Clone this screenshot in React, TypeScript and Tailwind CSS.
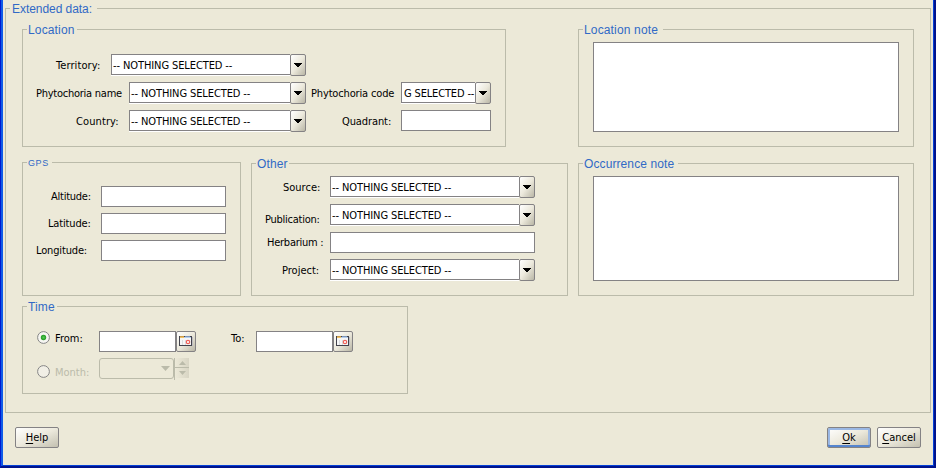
import type { ReactNode } from "react";

const UI = "font-['DejaVu_Sans_Condensed','DejaVu_Sans',sans-serif] [font-stretch:condensed] text-[11px] leading-[14px] whitespace-nowrap";

function Group({ title, box, legend, children }: { title: string; box: string; legend: string; children?: ReactNode }) {
  return (
    <section className={`relative shrink-0 border border-[#bbbbaa] ${box}`}>
      <h2 className={`absolute whitespace-nowrap bg-[#ece9d8] font-['Liberation_Sans',Arial,sans-serif] font-normal text-[#3169c6] ${legend}`}>
        {title}
      </h2>
      {children}
    </section>
  );
}

function Label({ text, className }: { text: string; className: string }) {
  return <label className={`${UI} block shrink-0 ${className}`}>{text}</label>;
}

function Field({ className }: { className: string }) {
  return <input type="text" className={`block h-[21px] shrink-0 border border-[#848284] bg-white outline-none ${className}`} />;
}

function Combo({ className, clipped = false }: { className: string; clipped?: boolean }) {
  return (
    <div className={`flex h-[22px] shrink-0 ${className}`}>
      <div className="h-[22px] min-w-0 flex-1 border-b border-white">
        <div className="flex h-[21px] items-center overflow-hidden border border-r-0 border-[#848284] bg-white">
          <span className={`${UI} pt-[2px] ${clipped ? "pl-[2px] tracking-[-0.15px]" : "pl-px tracking-[-0.1px]"}`}>
            {clipped ? "G SELECTED --" : "-- NOTHING SELECTED --"}
          </span>
        </div>
      </div>
      <button className="flex h-[22px] w-4 shrink-0 items-center justify-center rounded-[2px] border border-[#848284] bg-linear-to-br from-white via-[#ece9dc] to-[#b9b6a6]">
        <svg width="8" height="4" shapeRendering="crispEdges">
          <path d="M0 0h8v1H7v1H6v1H5v1H3V3H2V2H1V1H0z" fill="#000" />
        </svg>
      </button>
    </div>
  );
}

function DateField() {
  return (
    <div className="flex">
      <Field className="w-[77px]" />
      <button className="flex h-[21px] w-5 items-center justify-center rounded-[2px] border border-[#848284] bg-linear-to-br from-white via-[#ece9dc] to-[#b9b6a6]">
        <svg width="14" height="11" viewBox="0 0 14 11" className="shrink-0" shapeRendering="crispEdges">
          <path d="M1 10h13V1h-1v9H1z" fill="#bdbcc0" />
          <rect width="13" height="10" fill="#42424c" />
          <rect x="1" y="1" width="11" height="8" fill="#f6f6f6" />
          <rect x="1" y="0" width="4" height="1" fill="#c99a4c" />
          <rect x="1" y="1" width="4" height="1" fill="#f2c266" />
          <rect x="6" y="0" width="5" height="1" fill="#7c94b8" />
          <rect x="5" y="1" width="7" height="1" fill="#b4cdec" />
          <path d="M3 4h1v5H3zM6 4h1v5H6z" fill="#dadce0" />
          <circle cx="9" cy="6" r="1.7" fill="#fff" stroke="#ee6058" strokeWidth="1.2" shapeRendering="auto" />
        </svg>
      </button>
    </div>
  );
}

function Radio({ checked = false }: { checked?: boolean }) {
  return (
    <svg width="13" height="13" className="block shrink-0">
      <defs>
        <radialGradient id="dot">
          <stop offset="0" stopColor="#55c855" />
          <stop offset="1" stopColor="#219a21" />
        </radialGradient>
      </defs>
      <circle cx="6.5" cy="6.5" r="5.9" fill={checked ? "#f7f6f2" : "#f1efe6"} stroke="#858585" />
      {checked && <circle cx="6.5" cy="6.5" r="2.7" fill="url(#dot)" />}
    </svg>
  );
}

function Push({ mnemonic, rest, focused = false, className }: { mnemonic: string; rest: string; focused?: boolean; className: string }) {
  return (
    <button
      className={`${UI} h-[21px] w-11 shrink-0 rounded-[2px] border border-[#848284] bg-linear-to-br from-white via-[#ece9dc] to-[#c3c0b0] text-black ${className} ${
        focused ? "shadow-[inset_0_-2px_0_#5585cf,inset_0_0_0_2px_#9bb8e4]" : ""
      }`}
    >
      <span className="underline decoration-1 underline-offset-2">{mnemonic}</span>
      {rest}
    </button>
  );
}

export default function App() {
  return (
    <main className="h-[468px] w-[936px] overflow-hidden border-r-2 border-b-2 border-l border-r-[#00138c] border-b-[#00138c] border-l-[#0019cf] bg-[#ece9d8] text-black">
      <div className="h-[466px] border-r border-b border-l-2 border-r-[#0441d8] border-b-[#0441d8] border-l-[#0f5be8] pt-2 pl-[2px]">
        <Group
          title="Extended data:"
          box="h-[405px] w-[926px] pt-5 pl-4"
          legend="left-[4px] top-[-8px] w-[87px] pl-[2px] text-[12px] leading-4 tracking-[-0.05px]"
        >
          <div className="flex gap-[72px]">
            <Group title="Location" box="flex h-[118px] w-[484px] pt-6" legend="left-1 top-[-8px] w-[50px] pl-px text-[12px] leading-4 tracking-[0.15px]">
              <div className="flex w-[283px] flex-col gap-1.5">
                <div className="flex items-center">
                  <Label text="Territory:" className="w-[88px] pt-[2px] pl-[33px] tracking-[0.1px]" />
                  <Combo className="w-[195px]" />
                </div>
                <div className="flex items-center">
                  <Label text="Phytochoria name" className="w-[106px] pt-[2px] pl-[13px] tracking-[-0.25px]" />
                  <Combo className="w-[177px]" />
                </div>
                <div className="flex items-center">
                  <Label text="Country:" className="w-[106px] pt-[2px] pl-[53px] tracking-[0.1px]" />
                  <Combo className="w-[177px]" />
                </div>
              </div>
              <div className="flex flex-col gap-1.5 pt-7">
                <div className="flex items-center">
                  <Label text="Phytochoria code" className="w-[95px] pt-[2px] pl-[5px] tracking-[-0.15px]" />
                  <Combo clipped className="w-[90px]" />
                </div>
                <div className="flex items-center">
                  <Label text="Quadrant:" className="w-[95px] pt-[2px] pl-[36px] tracking-[-0.1px]" />
                  <Field className="w-[90px]" />
                </div>
              </div>
            </Group>
            <Group title="Location note" box="h-[118px] w-[336px] pt-3 pl-[14px]" legend="left-1 top-[-8px] w-[80px] pl-px text-[12px] leading-4 tracking-[0.15px]">
              <textarea className="block h-[90px] w-[306px] resize-none border border-[#848284] bg-white outline-none" />
            </Group>
          </div>

          <div className="flex items-end pt-[15px]">
            <Group title="GPS" box="flex h-[134px] w-[219px] flex-col gap-1.5 pt-[23px]" legend="left-1 top-[-7px] w-[25px] pl-px text-[9px] leading-[14px] tracking-[0.6px]">
              <div className="flex items-center">
                <Label text="Altitude:" className="w-[78px] pl-[28px] tracking-[-0.25px]" />
                <Field className="w-[125px]" />
              </div>
              <div className="flex items-center">
                <Label text="Latitude:" className="w-[78px] pl-[25px] tracking-[-0.15px]" />
                <Field className="w-[125px]" />
              </div>
              <div className="flex items-center">
                <Label text="Longitude:" className="w-[78px] pl-[13px] tracking-[-0.15px]" />
                <Field className="w-[125px]" />
              </div>
            </Group>
            <Group title="Other" box="ml-[10px] flex h-[133px] w-[317px] flex-col pt-3" legend="left-1 top-[-8px] w-[33px] pl-px text-[12px] leading-4 tracking-[0.15px]">
              <div className="flex items-center">
                <Label text="Source:" className="w-[78px] pt-[2px] pl-[31px]" />
                <Combo className="w-[205px]" />
              </div>
              <div className="mt-1.5 flex h-[22px] items-start">
                <Label text="Publication:" className="w-[78px] pt-[9px] pl-[13px] tracking-[-0.25px]" />
                <Combo className="w-[205px]" />
              </div>
              <div className="mt-1.5 flex items-center">
                <Label text="Herbarium :" className="w-[78px] pl-[15px] tracking-[-0.25px]" />
                <Field className="w-[205px]" />
              </div>
              <div className="mt-1.5 flex items-center">
                <Label text="Project:" className="w-[78px] pt-[2px] pl-[30px]" />
                <Combo className="w-[205px]" />
              </div>
            </Group>
            <Group title="Occurrence note" box="ml-[10px] h-[133px] w-[336px] pt-3 pl-[14px]" legend="left-1 top-[-8px] w-[95px] pl-px text-[12px] leading-4 tracking-[0.1px]">
              <textarea className="block h-[105px] w-[306px] resize-none border border-[#848284] bg-white outline-none" />
            </Group>
          </div>

          <div className="pt-[10px]">
            <Group title="Time" box="h-[88px] w-[386px] pt-6 pl-[14px]" legend="left-1 top-[-8px] w-[30px] pl-px text-[12px] leading-4 tracking-[0.15px]">
              <div className="flex">
                <Radio checked />
                <Label text="From:" className="w-[49px] pt-px pl-[5px]" />
                <DateField />
                <Label text="To:" className="w-[60px] pt-px pl-[35px]" />
                <DateField />
              </div>
              <div className="flex pt-1.5">
                <div className="pt-[7px]"><Radio /></div>
                <Label text="Month:" className="w-[49px] pt-2 pl-[5px] text-[#bbbbaa]" />
                <div className="flex h-[21px] w-[75px] items-center justify-end rounded-[3px] border border-[#bbbbaa] pr-[3px]">
                  <svg width="9" height="5"><path d="M0 0h9L4.5 5z" fill="#bbbbaa" /></svg>
                </div>
                <div className="flex w-[15px] flex-col border-l border-[#bbbbaa]">
                  <span className="flex h-[10px] items-center justify-center border-b border-[#bbbbaa] bg-linear-to-r from-[#ece9d8] to-[#d8d5c4]">
                    <svg width="7" height="4"><path d="M0 4h7L3.5 0z" fill="#bbbbaa" /></svg>
                  </span>
                  <span className="flex h-[10px] items-center justify-center bg-linear-to-r from-[#ece9d8] to-[#d8d5c4]">
                    <svg width="7" height="4"><path d="M0 0h7L3.5 4z" fill="#bbbbaa" /></svg>
                  </span>
                </div>
              </div>
            </Group>
          </div>
        </Group>

        <footer className="flex pt-[14px] pl-[10px]">
          <Push mnemonic="H" rest="elp" className="" />
          <Push mnemonic="O" rest="k" focused className="ml-[768px]" />
          <Push mnemonic="C" rest="ancel" className="ml-1.5" />
        </footer>
      </div>
    </main>
  );
}
